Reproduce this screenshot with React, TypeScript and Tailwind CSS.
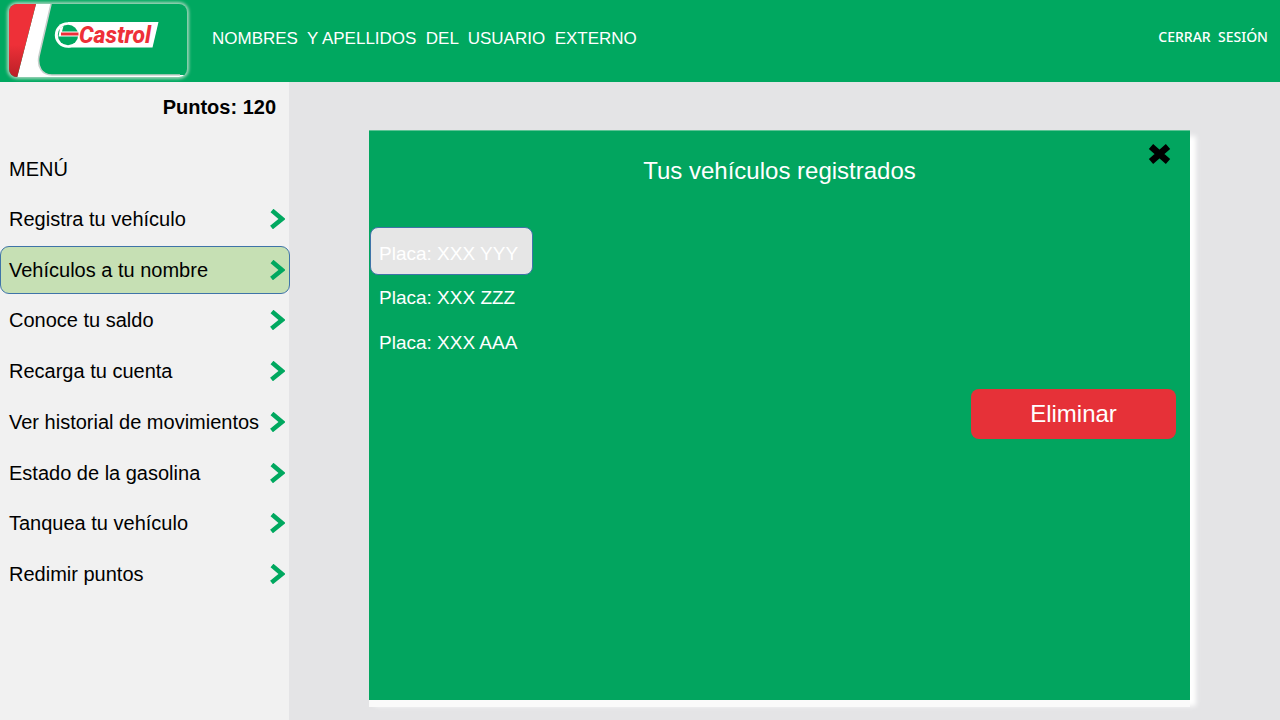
import { useState } from "react";

const menuItems = [
  "Registra tu vehículo",
  "Vehículos a tu nombre",
  "Conoce tu saldo",
  "Recarga tu cuenta",
  "Ver historial de movimientos",
  "Estado de la gasolina",
  "Tanquea tu vehículo",
  "Redimir puntos",
];

const plates = ["XXX YYY", "XXX ZZZ", "XXX AAA"];

function Logo() {
  return (
    <svg className="block h-[82px] w-[200px] shrink-0" viewBox="0 0 200 82" role="img" aria-label="Castrol">
      <defs>
        <clipPath id="card">
          <rect x="9" y="4" width="178" height="73" rx="8" />
        </clipPath>
        <linearGradient id="red" x1="0" y1="0" x2="0" y2="1">
          <stop offset="0" stopColor="#ee3038" />
          <stop offset="0.55" stopColor="#ee3038" />
          <stop offset="1" stopColor="#b91f26" />
        </linearGradient>
        <filter id="glow" x="-10%" y="-20%" width="120%" height="140%">
          <feGaussianBlur stdDeviation="1.8" />
        </filter>
      </defs>
      <rect x="7" y="2" width="182" height="77" rx="10" fill="#9fd3b8" filter="url(#glow)" />
      <g clipPath="url(#card)">
        <rect x="9" y="4" width="178" height="73" fill="#00a860" />
        <path d="M36 4H51L39 56C37 67 42 75 52 75H187V78H17Z" fill="#fff" />
        <path d="M51 4L39 56C37 67 42 75 52 75H180" fill="none" stroke="#c9cfcc" strokeWidth="1.6" />
        <path d="M9 4H36L17 78H9Z" fill="url(#red)" />
      </g>
      <path d="M68 22H158.500L152.500 47.500H68Z" fill="#fff" />
      <circle cx="67.500" cy="35" r="12.700" fill="#fff" />
      <circle cx="68" cy="35" r="10.200" fill="#00a860" />
      <path d="M60 28L58.500 36.500H79V31.500H62L63.500 26Z" fill="#fff" />
      <path d="M61 32.500H78.500V35.500H61Z" fill="#ee3038" />
      <text
        x="79"
        y="43"
        fill="#ee3038"
        fontSize="23"
        fontWeight="800"
        fontStyle="italic"
        fontFamily="Roboto, 'Liberation Sans', sans-serif"
      >
        Castrol
      </text>
    </svg>
  );
}

function Chevron() {
  return (
    <svg className="h-5 w-4 shrink-0" viewBox="0 0 16 20" aria-hidden="true">
      <path d="M3 1.500L13 10L2.500 18.500" fill="none" stroke="#00a85f" strokeWidth="4.500" />
    </svg>
  );
}

export default function App() {
  const [section, setSection] = useState(1);
  const [plate, setPlate] = useState(0);

  return (
    <div className="flex min-h-screen flex-col bg-[#e4e4e6] font-['Liberation_Sans',Arial,sans-serif] text-black">
      <header className="flex h-[82px] items-center bg-[#00a860] pr-3 text-white">
        <Logo />
        <h1 className="mb-1 ml-3 flex-1 text-[17px] leading-6 whitespace-pre">
          NOMBRES  Y APELLIDOS  DEL  USUARIO  EXTERNO
        </h1>
        <button className="mb-2 font-['Noto_Sans',sans-serif] text-sm leading-5 font-medium whitespace-pre">
          CERRAR  SESIÓN
        </button>
      </header>

      <div className="flex flex-1">
        <aside className="w-[289px] shrink-0 bg-[#f1f1f1]">
          <p className="pt-[11px] pr-[13px] text-right text-xl leading-7 font-bold">Puntos: 120</p>
          <h2 className="mt-[34px] pl-[9px] text-xl leading-7">MENÚ</h2>
          <nav className="mt-3 -mr-px">
            <ul className="flex h-[403px] flex-col justify-between">
              {menuItems.map((label, i) => (
                <li key={label}>
                  <button
                    onClick={() => setSection(i)}
                    className={
                      i === section
                        ? "flex h-12 w-full items-center justify-between rounded-[9px] border border-[#3f74a8] bg-[#c6e0b4] pr-1 pl-2 text-left text-xl whitespace-nowrap"
                        : "flex h-12 w-full items-center justify-between border border-transparent pr-1 pl-2 text-left text-xl whitespace-nowrap"
                    }
                  >
                    {label}
                    <Chevron />
                  </button>
                </li>
              ))}
            </ul>
          </nav>
        </aside>

        <main className="flex flex-1 pt-12 pr-[90px] pb-5 pl-20">
          <section className="flex-1 border-t border-[#5cc394] bg-[#02a55f] shadow-[0_7px_0_#fafafa,6px_6px_5px_#ffffff]">
            <div className="grid grid-cols-[1fr_auto_1fr] items-start pt-[11px]">
              <h2 className="col-start-2 mt-[13px] text-2xl leading-8 text-white">Tus vehículos registrados</h2>
              <button aria-label="Cerrar" className="mr-[18px] justify-self-end">
                <svg className="h-6 w-6" viewBox="0 0 24 24" aria-hidden="true">
                  <path d="M3 4.500L20 19.500M20 4.500L3 19.500" stroke="#000" strokeWidth="6.500" />
                </svg>
              </button>
            </div>
            <ul className="mt-10 flex flex-col items-start pl-px">
              {plates.map((p, i) => (
                <li key={p}>
                  <button
                    onClick={() => setPlate(i)}
                    className={
                      i === plate
                        ? "flex h-12 w-[163px] items-end rounded-lg border border-[#3f74a8] bg-[#e6e6e6] px-2 pb-2 text-[19px] leading-6 text-white"
                        : "flex h-[45px] w-[163px] items-center border border-transparent px-2 text-[19px] leading-6 text-white"
                    }
                  >
                    Placa: {p}
                  </button>
                </li>
              ))}
            </ul>
            <div className="mt-6 flex justify-end pr-3.5">
              <button className="h-[50px] w-[205px] rounded-lg bg-[#e63138] text-2xl text-white">Eliminar</button>
            </div>
          </section>
        </main>
      </div>
    </div>
  );
}
